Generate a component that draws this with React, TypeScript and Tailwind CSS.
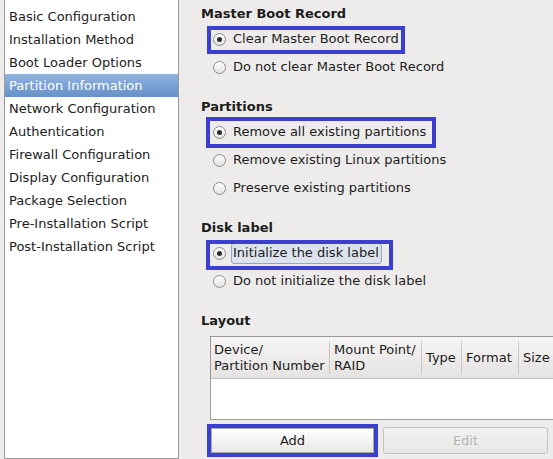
import React from "react";

const sections = [
  "Basic Configuration",
  "Installation Method",
  "Boot Loader Options",
  "Partition Information",
  "Network Configuration",
  "Authentication",
  "Firewall Configuration",
  "Display Configuration",
  "Package Selection",
  "Pre-Installation Script",
  "Post-Installation Script",
];

function Radio({ checked }: { checked?: boolean }) {
  return (
    <span className="grid h-[13px] w-[13px] shrink-0 place-items-center rounded-full border border-[#8c8c8c] bg-gradient-to-b from-white to-[#e4e3e2]">
      {checked && <span className="h-[5px] w-[5px] rounded-full bg-[#2a2a2a]" />}
    </span>
  );
}

type Mark = { left: number; top: number; w: number; h: number };

function Option({
  label,
  checked,
  mark,
  focused,
}: {
  label: string;
  checked?: boolean;
  mark?: Mark;
  focused?: boolean;
}) {
  return (
    <div className="relative flex h-[28px] items-center pl-[12px]">
      <Radio checked={checked} />
      {focused ? (
        <span className="ml-[5px] flex h-[21px] items-center rounded-[3px] border border-[#92a7c6] bg-[#dbe2ec] pl-[1px] pr-[2px]">
          {label}
        </span>
      ) : (
        <span className="ml-[7px]">{label}</span>
      )}
      {mark && (
        <span
          className="pointer-events-none absolute border-4 border-[#3b3fd1]"
          style={{ left: mark.left, top: mark.top, width: mark.w, height: mark.h }}
        />
      )}
    </div>
  );
}

function Heading({ children, first }: { children: React.ReactNode; first?: boolean }) {
  return (
    <div className={`flex h-[23px] items-center font-bold ${first ? "mt-[2px]" : "mt-[14px]"}`}>
      {children}
    </div>
  );
}

export default function App() {
  return (
    <div
      className="flex h-[459px] w-[553px] overflow-hidden bg-[#edeceb] text-[13px] text-[#1c1c1c]"
      style={{ fontFamily: '"DejaVu Sans", "Liberation Sans", sans-serif' }}
    >
      <div className="ml-[4px] h-[459px] w-[175px] shrink-0 border-x border-b border-[#9a9a9a] bg-white pt-[5px]">
        {sections.map((s) => (
          <div
            key={s}
            className={`flex h-[23px] items-center pl-[4px] ${
              s === "Partition Information"
                ? "bg-gradient-to-b from-[#8fb4e0] to-[#6791c8] text-white"
                : ""
            }`}
          >
            {s}
          </div>
        ))}
      </div>

      <div className="ml-[22px] flex min-w-0 flex-1 flex-col">
        <Heading first>Master Boot Record</Heading>
        <Option label="Clear Master Boot Record" checked mark={{ left: 6, top: 1, w: 198, h: 28 }} />
        <Option label="Do not clear Master Boot Record" />

        <Heading>Partitions</Heading>
        <Option label="Remove all existing partitions" checked mark={{ left: 5, top: -1, w: 230, h: 31 }} />
        <Option label="Remove existing Linux partitions" />
        <Option label="Preserve existing partitions" />

        <Heading>Disk label</Heading>
        <Option label="Initialize the disk label" checked focused mark={{ left: 5, top: 1, w: 187, h: 30 }} />
        <Option label="Do not initialize the disk label" />

        <Heading>Layout</Heading>

        <div className="ml-[9px] mt-[4px] h-[84px] w-[360px] shrink-0 border border-[#9a9a9a] bg-white">
          <div className="flex h-[42px] border-b border-[#c2c1c0] bg-gradient-to-b from-[#f6f5f4] to-[#e4e3e2] leading-[16px]">
            <div className="flex w-[118px] items-center pl-[3px]">
              Device/
              <br />
              Partition Number
            </div>
            <div className="my-[4px] w-px bg-[#c8c7c6]" />
            <div className="flex w-[91px] items-center pl-[4px]">
              Mount Point/
              <br />
              RAID
            </div>
            <div className="my-[4px] w-px bg-[#c8c7c6]" />
            <div className="flex w-[39px] items-center pl-[4px]">Type</div>
            <div className="my-[4px] w-px bg-[#c8c7c6]" />
            <div className="flex w-[56px] items-center pl-[4px]">Format</div>
            <div className="my-[4px] w-px bg-[#c8c7c6]" />
            <div className="flex w-[50px] items-center pl-[4px]">Size</div>
          </div>
        </div>

        <div className="mt-[4px] flex h-[33px] shrink-0">
          <div className="ml-[6px] h-[33px] w-[171px] border-4 border-[#3b3fd1]">
            <button className="flex h-full w-full items-center justify-center border border-[#a8a8a8] bg-gradient-to-b from-white to-[#e9e8e7] text-[#1c1c1c]">
              Add
            </button>
          </div>
          <button
            disabled
            className="ml-[5px] mt-[3px] flex h-[27px] w-[165px] items-center justify-center rounded-[3px] border border-[#c4c3c2] bg-gradient-to-b from-[#f3f2f1] to-[#e8e7e6] text-[#b4b4b4]"
          >
            Edit
          </button>
        </div>
      </div>
    </div>
  );
}
